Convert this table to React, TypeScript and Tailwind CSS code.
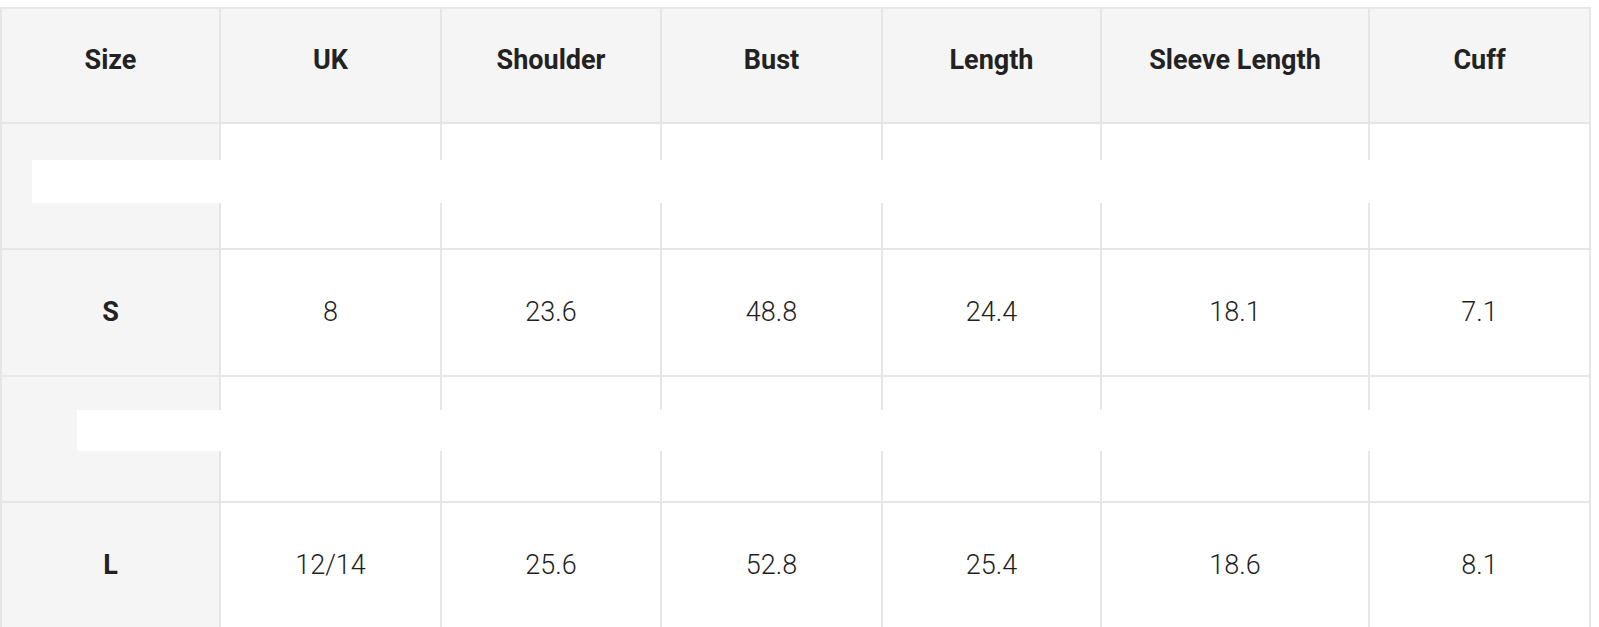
import React from 'react';

const HEADERS = ['Size', 'UK', 'Shoulder', 'Bust', 'Length', 'Sleeve Length', 'Cuff'];

// column widths in px (border-box), taken from the chart
const COLS = ['w-[221px]', 'w-[221px]', 'w-[220px]', 'w-[221px]', 'w-[219px]', 'w-[268px]', 'w-[221px]'];

const ROWS: { cells: string[] | null; h: string }[] = [
  { cells: null, h: 'h-[126px]' },
  { cells: ['S', '8', '23.6', '48.8', '24.4', '18.1', '7.1'], h: 'h-[127px]' },
  { cells: null, h: 'h-[126px]' },
  { cells: ['L', '12/14', '25.6', '52.8', '25.4', '18.6', '8.1'], h: 'h-[127px]' },
];

export default function App() {
  return (
    <div className="relative bg-white pt-[7px] w-[1599px] h-[627px] overflow-hidden font-['Roboto','Liberation_Sans',sans-serif]">
      <table className="table-fixed border-separate border-spacing-0 w-[1591px]">
        <colgroup>
          {COLS.map((c, i) => (
            <col key={i} className={c} />
          ))}
        </colgroup>
        <thead>
          <tr>
            {HEADERS.map((h, i) => (
              <th
                key={h}
                className={`h-[117px] pb-[11px] align-middle text-center bg-[#f5f5f5] border-t-2 border-b-2 border-r-2 border-[#e6e6e6] text-[27px] font-bold text-[#222222] ${
                  i === 0 ? 'border-l-2' : ''
                }`}
              >
                {h}
              </th>
            ))}
          </tr>
        </thead>
        <tbody>
          {ROWS.map((row, r) => (
            <tr key={r}>
              {HEADERS.map((_, i) => (
                <td
                  key={i}
                  className={`${row.h} align-middle text-center border-b-2 border-r-2 border-[#e6e6e6] text-[27px] ${
                    i === 0 ? 'border-l-2 bg-[#f5f5f5] font-bold text-[#222222]' : 'bg-white font-light text-[#1f1f1f]'
                  }`}
                >
                  {row.cells ? row.cells[i] : ''}
                </td>
              ))}
            </tr>
          ))}
        </tbody>
      </table>

      {/* white strips laid over the empty rows */}
      <div className="absolute top-[160px] left-[32px] w-[1556px] h-[43px] bg-white" />
      <div className="absolute top-[410px] left-[77px] w-[1511px] h-[41px] bg-white" />
    </div>
  );
}
